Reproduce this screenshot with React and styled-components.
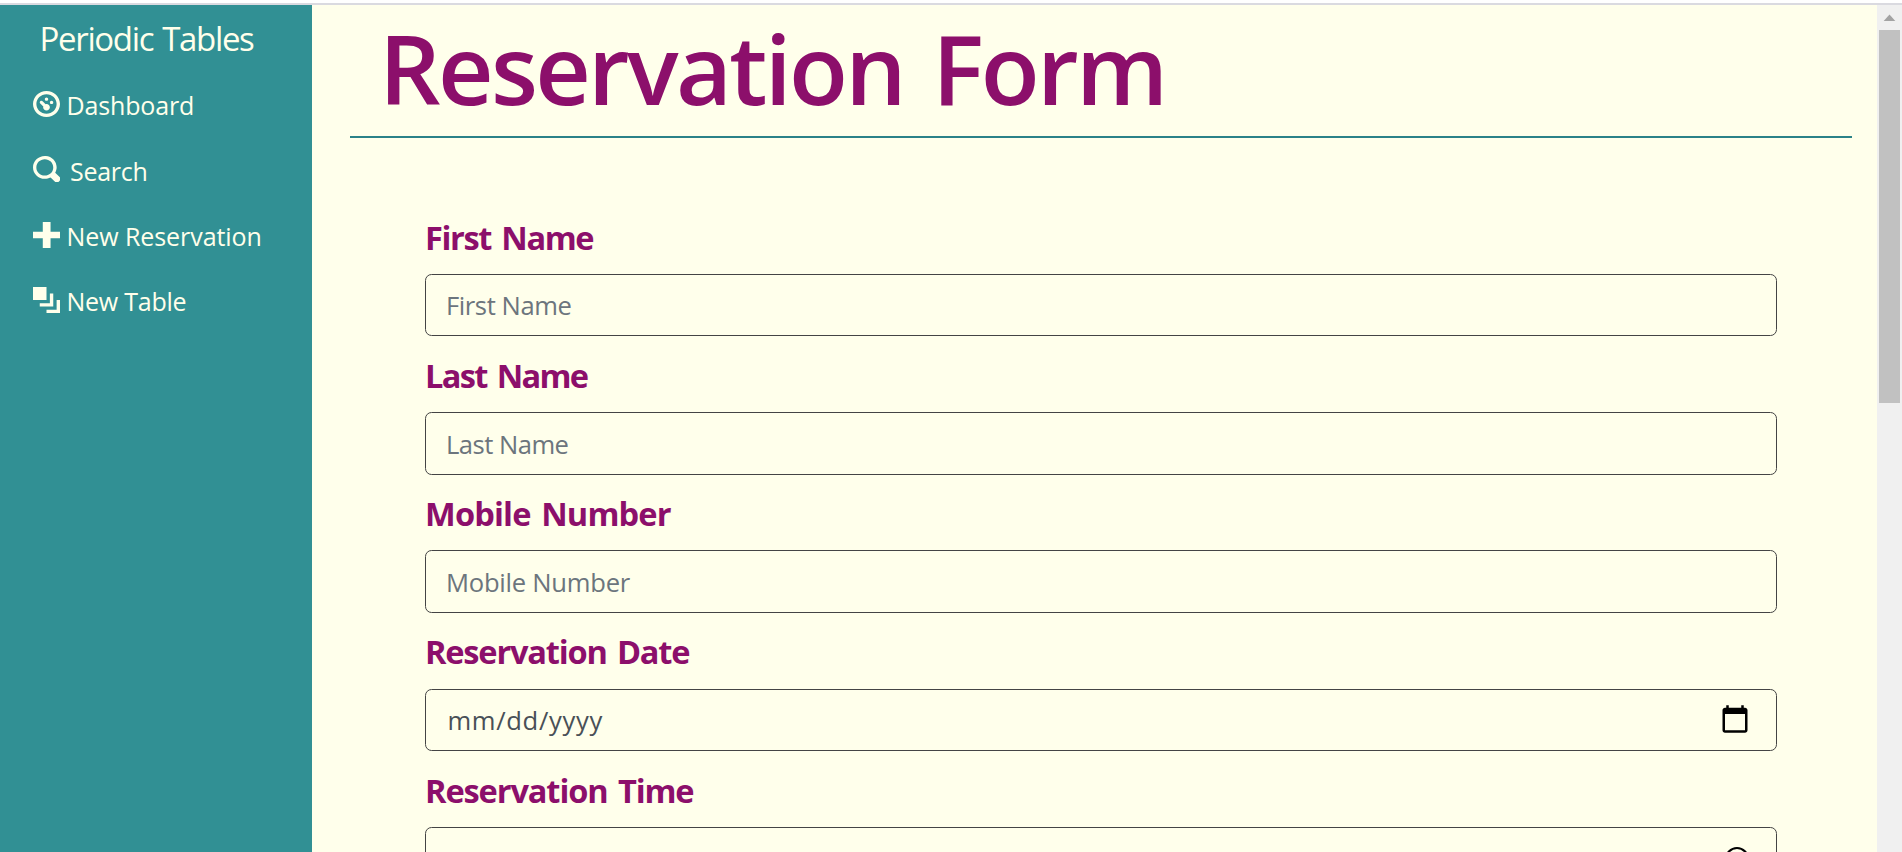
import React from 'react';
import styled, { createGlobalStyle } from 'styled-components';

const cream = '#ffffeb';
const teal = '#319094';
const plum = '#8c0f6b';

const GlobalStyle = createGlobalStyle`
  *, *::before, *::after { box-sizing: border-box; }
  html, body { margin: 0; height: 100%; overflow: hidden; background: ${cream}; }
  body { font-family: "Open Sans", "Noto Sans", sans-serif; }
`;

const Page = styled.div`
  display: flex;
  flex-direction: column;
  height: 100vh;
  overflow: hidden;
`;

const TopEdge = styled.div`
  flex: none;
  height: 5px;
  background: #fff;
  border-bottom: 2px solid #dadae0;
`;

const Body = styled.div`
  flex: 1;
  min-height: 0;
  display: flex;
`;

const Sidebar = styled.nav`
  flex: none;
  width: 312px;
  padding-top: 6px;
  background: ${teal};
  color: ${cream};
`;

const Brand = styled.div`
  height: 61.6px;
  padding-left: 39.6px;
  font-size: 33px;
  line-height: 56px;
  letter-spacing: -1.36px;
  word-spacing: 2px;
  white-space: nowrap;
`;

const NavItem = styled.a`
  display: flex;
  align-items: center;
  height: 65.3px;
  padding-left: 32.5px;
  color: inherit;
  text-decoration: none;
`;

const NavIcon = styled.svg`
  flex: none;
  width: 27px;
  height: 26px;
  margin-bottom: 2.6px;
  fill: currentColor;
`;

const NavText = styled.span`
  margin-left: ${(p) => p.$gap}px;
  font-size: 25px;
  line-height: 36px;
  letter-spacing: ${(p) => p.$tracking}px;
  white-space: nowrap;
`;

const Main = styled.main`
  flex: 1;
  min-width: 0;
  padding: 0 25px 0 38px;
`;

const Header = styled.header`
  height: 133px;
  padding: 4.5px 0 0 29px;
  border-bottom: 2px solid #2b8288;
`;

const Title = styled.h1`
  margin: 0;
  font-size: 96.6px;
  font-weight: 600;
  line-height: 116px;
  letter-spacing: -2.73px;
  word-spacing: 6px;
  white-space: nowrap;
  color: ${plum};
`;

const Form = styled.form`
  padding: 72.5px 75px 0;
`;

const Field = styled.div`
  height: 138.25px;
`;

const Label = styled.label`
  display: block;
  height: 63.4px;
  font-size: 32.6px;
  font-weight: 700;
  line-height: 53px;
  letter-spacing: ${(p) => p.$tracking}px;
  word-spacing: 3px;
  white-space: nowrap;
  color: ${plum};
`;

const controlBox = `
  width: 100%;
  height: 62.5px;
  padding: 1.5px 20px 0;
  border: 1px solid #444;
  border-radius: 6.5px;
  background: transparent;
  font: 400 25.6px "Open Sans", "Noto Sans", sans-serif;
`;

const TextInput = styled.input`
  ${controlBox}
  display: block;
  outline: none;
  letter-spacing: ${(p) => p.$tracking}px;
  &::placeholder { color: #6c757d; opacity: 1; }
`;

const PickerBox = styled.div`
  ${controlBox}
  display: flex;
  align-items: center;
  justify-content: space-between;
  padding: 1.5px 26.5px 0 21.5px;
  color: #495057;
  letter-spacing: 0.67px;
`;

const PickerIcon = styled.svg`
  flex: none;
  width: 30px;
  height: 30px;
  margin: 0 0 ${(p) => p.$lift}px auto;
`;

const Scrollbar = styled.div`
  flex: none;
  width: 25px;
  display: flex;
  flex-direction: column;
  align-items: center;
  background: #f0f0f0;
`;

const ScrollArrow = styled.svg`
  width: 25px;
  height: 25px;
  fill: #a3a3a3;
`;

const Thumb = styled.div`
  width: 21px;
  height: 373px;
  background: #c1c1c1;
`;

const nav = [
  {
    text: 'Dashboard', gap: 7, tracking: -0.15,
    d: 'M4 0c-2.2 0-4 1.8-4 4s1.8 4 4 4 4-1.8 4-4-1.8-4-4-4zm0 1c1.66 0 3 1.34 3 3s-1.34 3-3 3-3-1.34-3-3 1.34-3 3-3zm0 1c-.28 0-.5.22-.5.5s.22.5.5.5.5-.22.5-.5-.22-.5-.5-.5zm-1.66 1a.5.5 0 0 0-.19.84l.91.91c-.02.08-.06.16-.06.25 0 .55.45 1 1 1s1-.45 1-1-.45-1-1-1c-.09 0-.17.04-.25.06l-.91-.91a.5.5 0 0 0-.44-.16.5.5 0 0 0-.06 0zm3.16 0c-.28 0-.5.22-.5.5s.22.5.5.5.5-.22.5-.5-.22-.5-.5-.5z',
  },
  {
    text: 'Search', gap: 10.5, tracking: -0.27,
    d: 'M3.5 0c-1.93 0-3.5 1.57-3.5 3.5s1.57 3.5 3.5 3.5c.59 0 1.17-.14 1.66-.41a1 1 0 0 0 .13.13l1 1a1.02 1.02 0 1 0 1.44-1.44l-1-1a1 1 0 0 0-.16-.13c.27-.49.44-1.06.44-1.66 0-1.93-1.55-3.5-3.5-3.5zm0 1c1.39 0 2.5 1.11 2.5 2.5 0 .66-.24 1.27-.66 1.72-.01.01-.02.02-.03.03a1 1 0 0 0-.13.13c-.44.4-1.04.63-1.69.63-1.39 0-2.5-1.11-2.5-2.5s1.11-2.5 2.5-2.5z',
  },
  {
    text: 'New Reservation', gap: 7, tracking: -0.07,
    d: 'M2.9 0v3h-2.9v2h2.9v3h2.3v-3h2.8v-2h-2.8v-3h-2.3z',
  },
  {
    text: 'New Table', gap: 7, tracking: -0.25,
    d: 'M0 0v4h4v-4h-4zm5 2v3h-3v1h4v-4h-1zm2 2v3h-3v1h4v-4h-1z',
  },
];

const textFields = [
  { label: 'First Name', labelTracking: -1.36, tracking: -0.42 },
  { label: 'Last Name', labelTracking: -1.65, tracking: -0.52 },
  { label: 'Mobile Number', labelTracking: -0.84, tracking: -0.24 },
];

export default function App() {
  return (
    <Page>
      <GlobalStyle />
      <TopEdge />
      <Body>
        <Sidebar>
          <Brand>Periodic Tables</Brand>
          {nav.map((item) => (
            <NavItem key={item.text}>
              <NavIcon viewBox="0 0 8 8" preserveAspectRatio="none"><path d={item.d} /></NavIcon>
              <NavText $gap={item.gap} $tracking={item.tracking}>{item.text}</NavText>
            </NavItem>
          ))}
        </Sidebar>
        <Main>
          <Header>
            <Title>Reservation Form</Title>
          </Header>
          <Form>
            {textFields.map((f) => (
              <Field key={f.label}>
                <Label $tracking={f.labelTracking}>{f.label}</Label>
                <TextInput type="text" placeholder={f.label} $tracking={f.tracking} />
              </Field>
            ))}
            <Field>
              <Label $tracking={-1.2}>Reservation Date</Label>
              <PickerBox>
                <span>mm/dd/yyyy</span>
                <PickerIcon viewBox="0 0 24 24" $lift={4}>
                  <path d="M20 3h-1V1h-2v2H7V1H5v2H4c-1.1 0-2 .9-2 2v16c0 1.1.9 2 2 2h16c1.1 0 2-.9 2-2V5c0-1.1-.9-2-2-2zm0 18H4V8h16v13z" />
                </PickerIcon>
              </PickerBox>
            </Field>
            <Field>
              <Label $tracking={-1.12}>Reservation Time</Label>
              <PickerBox>
                <PickerIcon viewBox="0 0 30 30" $lift={1.5} fill="none" stroke="#000" strokeWidth="2.2">
                  <circle cx="17" cy="16" r="11" />
                  <path d="M17 9v7.5l5 3" />
                </PickerIcon>
              </PickerBox>
            </Field>
          </Form>
        </Main>
        <Scrollbar>
          <ScrollArrow viewBox="0 0 25 25"><path d="M12.5 9.5L18.3 16H6.7z" /></ScrollArrow>
          <Thumb />
        </Scrollbar>
      </Body>
    </Page>
  );
}
